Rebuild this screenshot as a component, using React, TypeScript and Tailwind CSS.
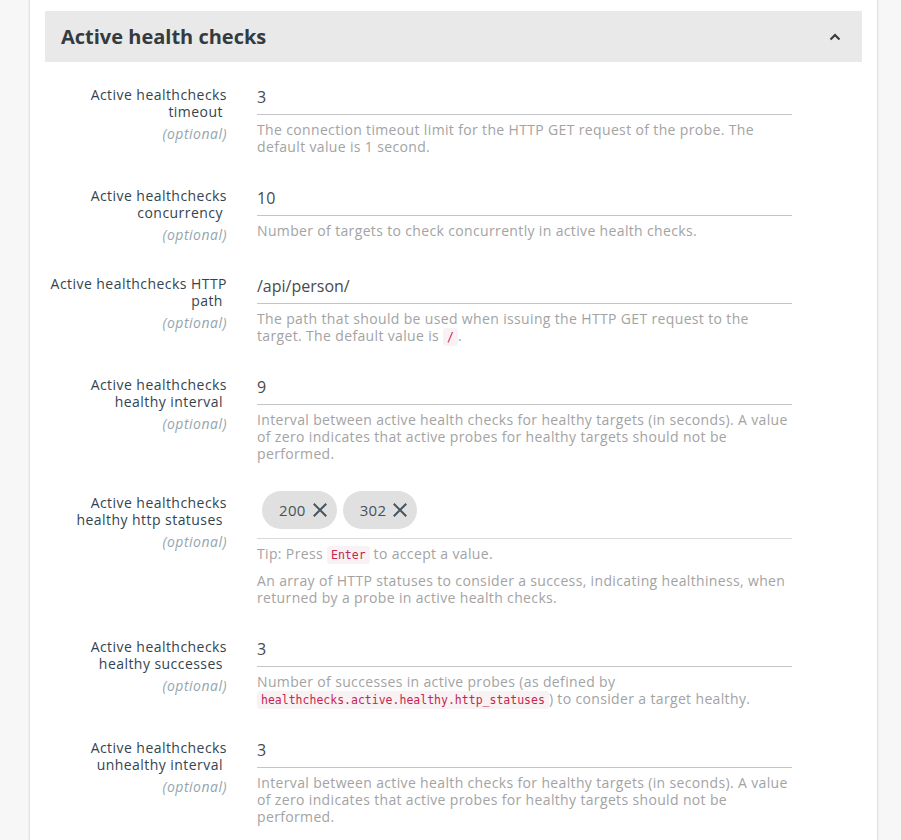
import React from 'react';

type Field = {
  label: string;
  value?: string;
  chips?: string[];
  help: React.ReactNode;
  tip?: boolean;
};

function Code({ children }: { children: React.ReactNode }) {
  return (
    <code className="rounded-[3px] bg-[#f9f2f4] px-[4px] py-[2px] font-['DejaVu_Sans_Mono',monospace] text-[11.5px] leading-none tracking-normal text-[#c7254e]">
      {children}
    </code>
  );
}

function XIcon() {
  return (
    <svg width="14" height="14" viewBox="0 0 14 14" className="text-[#46535c]">
      <path d="M1.5 1.5 12.5 12.5M12.5 1.5 1.5 12.5" stroke="currentColor" strokeWidth="2" strokeLinecap="square" />
    </svg>
  );
}

const fields: Field[] = [
  {
    label: 'Active healthchecks timeout',
    value: '3',
    help: 'The connection timeout limit for the HTTP GET request of the probe. The default value is 1 second.',
  },
  {
    label: 'Active healthchecks concurrency',
    value: '10',
    help: 'Number of targets to check concurrently in active health checks.',
  },
  {
    label: 'Active healthchecks HTTP path',
    value: '/api/person/',
    help: (
      <>
        The path that should be used when issuing the HTTP GET request to the target. The default value is <Code>/</Code>.
      </>
    ),
  },
  {
    label: 'Active healthchecks healthy interval',
    value: '9',
    help: 'Interval between active health checks for healthy targets (in seconds). A value of zero indicates that active probes for healthy targets should not be performed.',
  },
  {
    label: 'Active healthchecks healthy http statuses',
    chips: ['200', '302'],
    tip: true,
    help: 'An array of HTTP statuses to consider a success, indicating healthiness, when returned by a probe in active health checks.',
  },
  {
    label: 'Active healthchecks healthy successes',
    value: '3',
    help: (
      <>
        Number of successes in active probes (as defined by <Code>healthchecks.active.healthy.http_statuses</Code>) to consider a target healthy.
      </>
    ),
  },
  {
    label: 'Active healthchecks unhealthy interval',
    value: '3',
    help: 'Interval between active health checks for healthy targets (in seconds). A value of zero indicates that active probes for healthy targets should not be performed.',
  },
];

function FieldRow({ field }: { field: Field }) {
  return (
    <div className="flex pb-8">
      <div className="w-[182px] shrink-0 text-right">
        <div className="text-[14px] leading-[17px] font-medium tracking-[0.45px] text-[#34444f]">{field.label}&nbsp;</div>
        <div className="mt-[5px] text-[14px] leading-[17px] italic tracking-[0.5px] text-[#95a5b0]">(optional)</div>
      </div>
      <div className="ml-[30px] w-[535px]">
        {field.chips ? (
          <div className="-mt-[3px] flex h-[48px] items-start gap-[6px] border-b border-[#d9d9d9] pl-[5px]">
            {field.chips.map((c) => (
              <div key={c} className="flex h-[38px] items-center gap-[7px] rounded-full bg-[#e0e0e0] pl-[17px] pr-[10px] text-[15px] tracking-[0.3px] text-[#46535c]">
                {c}
                <XIcon />
              </div>
            ))}
          </div>
        ) : (
          <div className="-mt-[1px] h-[30px] border-b border-[#c4c4c4] text-[16px] leading-[24px] text-[#4a4a4a]">{field.value}</div>
        )}
        {field.tip && (
          <div className="mt-[6px] text-[14px] leading-[17px] tracking-[0.35px] text-[#a3a3a3]">
            Tip: Press <Code>Enter</Code> to accept a value.
          </div>
        )}
        <div className={`${field.tip ? 'mt-[10px]' : 'mt-[6px]'} text-[14px] leading-[17px] tracking-[0.35px] text-[#a3a3a3]`}>
          {field.help}
        </div>
      </div>
    </div>
  );
}

export default function App() {
  return (
    <div className="min-h-screen bg-[#f7f7f7] pl-[29px] pr-[23px] font-['Open_Sans',sans-serif]">
      <div className="min-h-[840px] border-x border-[#e2e2e2] bg-white px-[15px] pt-[11px] shadow-[0_0_2px_rgba(0,0,0,0.08)]">
        <div className="flex h-[51px] items-center justify-between bg-[#e9e9e9] pl-[16px] pr-[21px]">
          <h2 className="text-[20px] font-bold text-[#333b40]">Active health checks</h2>
          <svg width="12" height="8" viewBox="0 0 12 8" className="text-[#3d3d3d]">
            <path d="M1.5 6.5 6 2l4.5 4.5" fill="none" stroke="currentColor" strokeWidth="2.2" />
          </svg>
        </div>
        <div className="pt-[24px]">
          {fields.map((f) => (
            <FieldRow key={f.label} field={f} />
          ))}
        </div>
      </div>
    </div>
  );
}
